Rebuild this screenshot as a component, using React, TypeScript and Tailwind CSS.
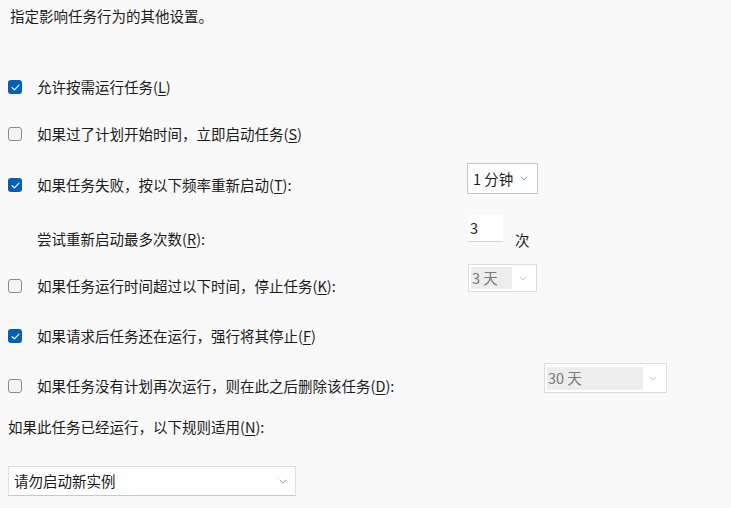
import type { ReactNode } from 'react'

function Check({ checked }: { checked: boolean }) {
  if (checked) {
    return (
      <span className="flex h-[14px] w-[14px] shrink-0 items-center justify-center rounded-[3px] bg-[#005fb8]">
        <svg width="9" height="7" viewBox="0 0 9 7" fill="none">
          <path d="M1 3.6 L3.4 5.8 L8 1.2" stroke="#ffffff" strokeWidth="1.2" strokeLinecap="round" strokeLinejoin="round" />
        </svg>
      </span>
    )
  }
  return (
    <span className="block h-[14px] w-[14px] shrink-0 rounded-[3px] border border-[#8a8a8a] bg-[#f4f4f4]" />
  )
}

function Chevron({ color = '#8c8c8c' }: { color?: string }) {
  return (
    <svg width="8" height="5" viewBox="0 0 8 5" fill="none">
      <path d="M1 1 L4 4 L7 1" stroke={color} strokeWidth="0.9" strokeLinecap="round" strokeLinejoin="round" />
    </svg>
  )
}

function Key({ k }: { k: string }) {
  return (
    <>
      (<span className="underline underline-offset-2">{k}</span>)
    </>
  )
}

function CheckLabel({ checked, children }: { checked: boolean; children: ReactNode }) {
  return (
    <div className="flex h-[20px] items-center">
      <Check checked={checked} />
      <span className="ml-[15px] whitespace-nowrap leading-[20px]">{children}</span>
    </div>
  )
}

export default function App() {
  return (
    <div
      className="h-[508px] w-[731px] overflow-hidden bg-[#f9f9f9] pl-[8px] text-[14.5px] text-[#1b1b1b]"
      style={{ fontFamily: '"Noto Sans CJK SC", "Noto Sans", sans-serif' }}
    >
      <div className="flex flex-col">
        <div className="pl-[2px] pt-[6px] leading-[20px]">指定影响任务行为的其他设置。</div>

        <div className="mt-[51px]">
          <CheckLabel checked>
            允许按需运行任务<Key k="L" />
          </CheckLabel>
        </div>

        <div className="mt-[27px]">
          <CheckLabel checked={false}>
            如果过了计划开始时间，立即启动任务<Key k="S" />
          </CheckLabel>
        </div>

        <div className="mt-[19px] flex items-start">
          <div className="w-[459px] pt-[12px]">
            <CheckLabel checked>
              如果任务失败，按以下频率重新启动<Key k="T" />:
            </CheckLabel>
          </div>
          <div className="flex h-[31px] w-[71px] items-center justify-between border border-[#c6c6c6] bg-white pl-[5px] pr-[9px]">
            <span className="leading-[20px]">1 分钟</span>
            <Chevron />
          </div>
        </div>

        <div className="mt-[20px] flex items-start">
          <div className="w-[460px] pl-[29px] pt-[14px] leading-[20px]">
            尝试重新启动最多次数<Key k="R" />:
          </div>
          <div className="flex h-[27px] w-[35px] items-center border-b border-[#d4d4d4] bg-white pl-[2px] leading-[20px]">
            3
          </div>
          <span className="ml-[12px] pt-[15px] leading-[20px]">次</span>
        </div>

        <div className="mt-[14px] flex items-start">
          <div className="w-[460px] pt-[12px]">
            <CheckLabel checked={false}>
              如果任务运行时间超过以下时间，停止任务<Key k="K" />:
            </CheckLabel>
          </div>
          <div className="flex h-[28px] w-[69px] items-center justify-between border border-[#dcdcdc] bg-white pl-[2px] pr-[9px]">
            <span className="flex h-[22px] w-[41px] items-center bg-[#ededed] pl-[1px] leading-[20px] text-[#7a7a7a]">
              3 天
            </span>
            <Chevron color="#c4c4c4" />
          </div>
        </div>

        <div className="mt-[30px]">
          <CheckLabel checked>
            如果请求后任务还在运行，强行将其停止<Key k="F" />
          </CheckLabel>
        </div>

        <div className="mt-[17px] flex items-start">
          <div className="w-[536px] pt-[13px]">
            <CheckLabel checked={false}>
              如果任务没有计划再次运行，则在此之后删除该任务<Key k="D" />:
            </CheckLabel>
          </div>
          <div className="flex h-[30px] w-[123px] items-center justify-between border border-[#dcdcdc] bg-white pl-[2px] pr-[9px]">
            <span className="flex h-[23px] w-[96px] items-center bg-[#ededed] pl-[1px] leading-[20px] text-[#7a7a7a]">
              30 天
            </span>
            <Chevron color="#c4c4c4" />
          </div>
        </div>

        <div className="mt-[21px] leading-[20px]">
          如果此任务已经运行，以下规则适用<Key k="N" />:
        </div>

        <div className="mt-[29px] flex h-[30px] w-[288px] items-center justify-between border border-[#e0e0e0] border-b-[#c8c8c8] bg-white pl-[5px] pr-[8px]">
          <span className="leading-[20px]">请勿启动新实例</span>
          <Chevron color="#9a9a9a" />
        </div>
      </div>
    </div>
  )
}
